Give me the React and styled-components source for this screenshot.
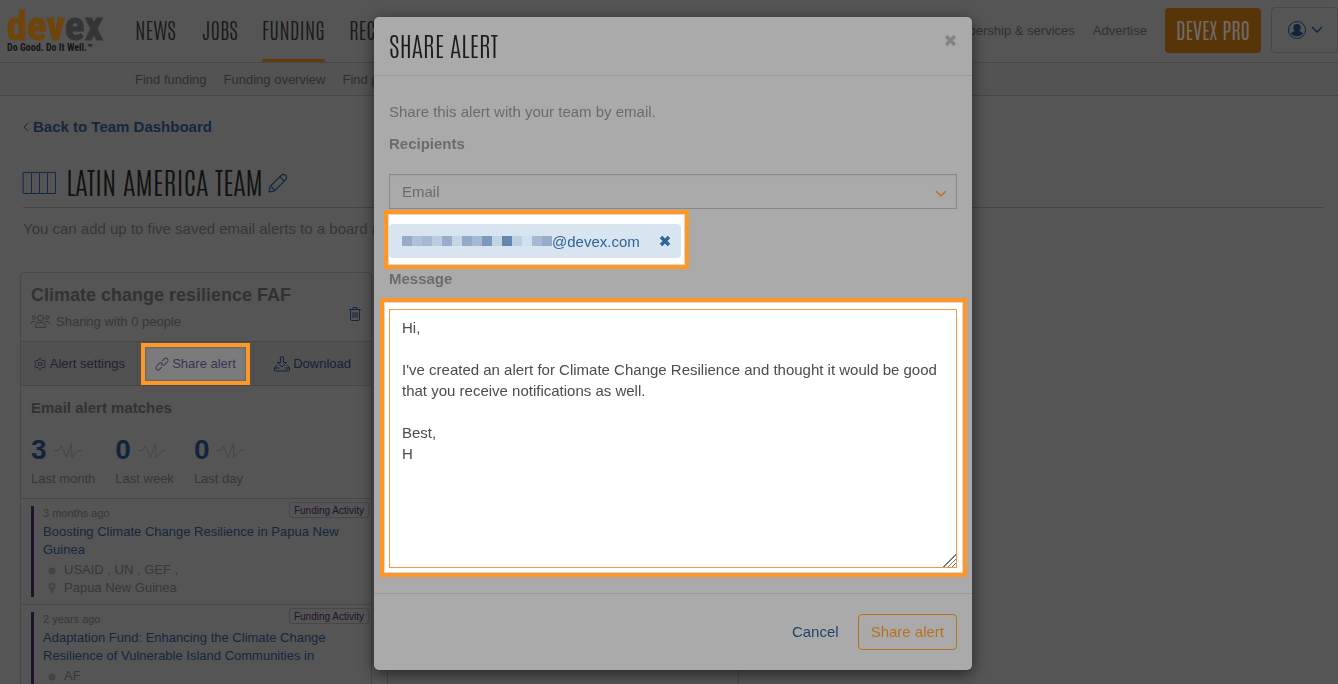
import { useState } from 'react';
import { Settings } from 'lucide-react';
import styled, { createGlobalStyle } from 'styled-components';

const GlobalStyle = createGlobalStyle`
    * {
        box-sizing: border-box;
    }

    body {
        margin: 0;
        height: 100vh;
        overflow: hidden;
        background: #555;
        color: #373737;
        font-family: "Liberation Sans", Arial, sans-serif;
        font-size: 15px;
        line-height: 21px;
    }

    a {
        color: inherit;
        text-decoration: none;
    }

    button, select, textarea {
        font: inherit;
        color: inherit;
        cursor: pointer;
    }

    h1, h2, h3, p, ul {
        margin: 0;
        padding: 0;
    }

    svg {
        display: block;
        flex-shrink: 0;
        overflow: visible;
    }
`;

const display = '"Antonio", "Bebas Neue", "Roboto Condensed", "Liberation Sans Narrow", "Liberation Sans", sans-serif';

const TopBar = styled.header`
    display: flex;
    align-items: flex-start;
    height: 63px;
    padding-left: 7px;
    border-bottom: 1px solid #474747;
    white-space: nowrap;
`;

const Logo = styled.a`
    width: 128px;
    padding-top: 8px;
    flex-shrink: 0;
`;

const MainNav = styled.nav`
    display: flex;
    gap: 24px;
    height: 62px;
    flex-grow: 1;
`;

const MainLink = styled.a`
    min-width: ${({ $width }) => $width}px;
    padding-top: 15px;
    border-bottom: 3px solid ${({ $active }) => ($active ? '#603b0a' : 'transparent')};
    font-family: ${display};
    font-size: 22px;
    line-height: 28px;
    font-weight: 100;
    color: #1a1a1a;
`;

const Tools = styled.div`
    display: flex;
    align-items: center;
    height: 60px;
    font-size: 13px;
    color: #303030;

    > a {
        margin-right: 18px;
    }
`;

const ProButton = styled.button`
    height: 45px;
    width: 96px;
    padding: 0 0 2px;
    border: none;
    border-radius: 4px;
    background: #583509;
    font-family: ${display};
    font-size: 21px;
    font-weight: 200;
    color: #706b66;
`;

const AccountButton = styled.button`
    display: flex;
    align-items: center;
    gap: 4px;
    height: 46px;
    width: 67px;
    margin-left: 10px;
    padding: 0 15px;
    border: 1px solid #474747;
    border-radius: 4px;
    background: none;
    color: #12243b;
`;

const SubNav = styled.nav`
    display: flex;
    align-items: center;
    gap: 17px;
    height: 33px;
    padding-left: 135px;
    border-bottom: 1px solid #474747;
    background: #535353;
    font-size: 13px;
    color: #2f2f2f;
    white-space: nowrap;
`;

const Content = styled.main`
    padding: 20px 15px 0 23px;
`;

const BackLink = styled.a`
    display: flex;
    align-items: center;
    gap: 4px;
    font-weight: bold;
    color: #14273f;
`;

const TeamHeading = styled.div`
    display: flex;
    align-items: center;
    gap: 10px;
    height: 71px;
    padding-top: 22px;
    border-bottom: 1px solid #434343;
    color: #142b45;
`;

const TeamName = styled.h1`
    padding-bottom: 5px;
    font-family: ${display};
    font-size: 30px;
    line-height: 40px;
    font-weight: 100;
    color: #111;
`;

const EditButton = styled.button`
    margin-left: -5px;
    padding: 0;
    border: none;
    background: none;
    color: #14273f;
`;

const Intro = styled.p`
    padding-top: 10px;
    color: #363636;
    white-space: nowrap;
`;

const Board = styled.section`
    display: flex;
    gap: 15px;
    margin: 33px 0 0 -3px;
`;

const Card = styled.article`
    width: 352px;
    min-height: 420px;
    flex-shrink: 0;
    border: 1px solid #474747;
    border-radius: 4px;
`;

const CardHeader = styled.div`
    display: flex;
    align-items: center;
    justify-content: space-between;
    height: 68px;
    padding: 0 10px;

    h2 {
        font-size: 18px;
        line-height: 24px;
        color: #323232;
    }

    > svg {
        margin-top: 14px;
        color: #14273f;
    }
`;

const Sharing = styled.p`
    display: flex;
    align-items: center;
    gap: 6px;
    margin-top: 4px;
    font-size: 13px;
`;

const Actions = styled.div`
    display: grid;
    grid-template-columns: repeat(3, 1fr);
    height: 45px;
    border: solid #474747;
    border-width: 1px 0;
    background: #515151;
`;

const Action = styled.button`
    display: flex;
    align-items: center;
    justify-content: center;
    gap: 3px;
    padding: 0;
    border: none;
    border-right: ${({ $last }) => ($last ? 'none' : '1px solid #474747')};
    background: none;
    font-size: 13px;
    color: ${({ $color }) => $color};
    white-space: nowrap;
`;

const ActionHighlight = styled.span`
    display: flex;
    align-items: center;
    justify-content: center;
    gap: 3px;
    width: 101px;
    height: 34px;
    background: #7b7b7b;
    box-shadow: 0 0 0 4px #ff9727, inset 0 0 2px 1px #666;
`;

const Matches = styled.div`
    height: 113px;
    padding: 11px 10px 0;
    border-bottom: 1px solid #474747;

    h3 {
        font-size: 15px;
        color: #323232;
    }
`;

const Stats = styled.div`
    display: flex;
    gap: 20px;
    margin-top: 14px;
    font-size: 13px;
`;

const StatValue = styled.div`
    display: flex;
    align-items: center;
    gap: 7px;
    height: 34px;
    margin-bottom: 2px;
    font-size: 28px;
    font-weight: bold;
    color: #12243c;

    svg {
        margin-top: 4px;
        color: #454545;
    }
`;

const Result = styled.div`
    padding: 7px 2px 7px 10px;
    border-bottom: 1px solid #474747;
`;

const ResultBody = styled.div`
    padding-left: 9px;
    border-left: 3px solid #22112f;
    font-size: 13px;
    line-height: 18px;

    > a {
        display: block;
        width: 310px;
        color: #14273f;
    }
`;

const ResultTop = styled.div`
    display: flex;
    justify-content: space-between;
    height: 17px;
    font-size: 11px;
    line-height: 14px;
`;

const Tag = styled.span`
    height: 16px;
    margin-top: -4px;
    padding: 0 4px;
    border: 1px solid #474747;
    border-radius: 3px;
    font-size: 10px;
    line-height: 16px;
    color: #22112f;
`;

const Meta = styled.ul`
    padding-top: 2px;
    list-style: none;

    li {
        display: flex;
        align-items: center;
        gap: 7px;
        padding-left: 4px;
    }

    svg {
        color: #444;
    }
`;

const ModalLayer = styled.div`
    position: fixed;
    inset: 0;
    display: flex;
    justify-content: center;
    align-items: flex-start;
    padding: 17px 0 0 8px;
`;

const Modal = styled.form`
    width: 598px;
    max-width: 100%;
    border-radius: 5px;
    background: #aaa;
    box-shadow: 0 4px 15px rgba(0, 0, 0, 0.55);
    color: #6b6b6b;
`;

const ModalHeader = styled.div`
    display: flex;
    justify-content: space-between;
    align-items: flex-start;
    height: 59px;
    padding: 17px 15px 0;
    border-bottom: 1px solid #999;

    h2 {
        font-family: ${display};
        font-size: 27px;
        line-height: 22px;
        font-weight: 100;
        color: #1c1c1c;
    }
`;

const IconButton = styled.button`
    display: block;
    padding: 0;
    border: none;
    background: none;
    color: ${({ $color }) => $color};
`;

const ModalBody = styled.div`
    padding: 25px 15px 20px;

    label {
        display: block;
        font-weight: bold;
        line-height: 22px;
    }
`;

const Lead = styled.p`
    margin-bottom: 11px;
`;

const SelectBox = styled.div`
    display: grid;
    align-items: center;
    margin: 19px 0 5px;

    > * {
        grid-area: 1 / 1;
    }

    > svg {
        justify-self: end;
        margin: 4px 10px 0 0;
        color: #b8721d;
        pointer-events: none;
    }
`;

const Select = styled.select`
    width: 100%;
    height: 35px;
    padding: 0 12px;
    appearance: none;
    border: 1px solid #888;
    border-radius: 0;
    background: #aaa;
    box-shadow: inset 0 1px 1px rgba(0, 0, 0, 0.05);
`;

const Highlight = styled.div`
    width: ${({ $wide }) => ($wide ? 'auto' : 'fit-content')};
    margin: ${({ $wide }) => ($wide ? '12px -6px 0 -5px' : '0 0 3px -1px')};
    padding: ${({ $wide }) => ($wide ? '7px 6px 5px 5px' : '10px 4px 7px 1px')};
    background: #fff;
    box-shadow: 0 0 0 4px #ff9727, inset 0 0 1px 1px #d5d5d5;
`;

const Chip = styled.div`
    display: flex;
    align-items: center;
    height: 34px;
    padding: 0 10px 0 13px;
    border-radius: 4px;
    background: #d8e5f0;
    color: #2f6496;

    button {
        margin-left: 19px;
    }
`;

const Redacted = styled.span`
    display: flex;
`;

const Block = styled.i`
    width: 10px;
    height: 10px;
    background: ${({ $color }) => $color};
`;

const Message = styled.textarea`
    display: block;
    width: 100%;
    height: 259px;
    padding: 7px 12px;
    border: 1px solid #f39b3b;
    outline: none;
    resize: vertical;
    color: #4c4c4c;
    cursor: text;

    &::-webkit-resizer {
        background:
            linear-gradient(135deg, #fff 50%, transparent 50%),
            repeating-linear-gradient(135deg, #777 0 1px, #fff 1px 3px);
    }
`;

const ModalFooter = styled.div`
    display: flex;
    justify-content: flex-end;
    gap: 6px;
    padding: 20px 15px;
    border-top: 1px solid #999;
`;

const Button = styled.button`
    height: 36px;
    padding: 0 12px 2px;
    border: 1px solid ${({ $primary }) => ($primary ? '#b8721d' : 'transparent')};
    border-radius: 4px;
    background: none;
    color: ${({ $primary }) => ($primary ? '#b8721d' : '#1f436a')};
`;

const blocks = [
    '#95abc8', '#adc2da', '#a6b7d1', '#bccde0', '#98adc9', '#c6d5e5', '#91aac7', '#a4bad3',
    '#7a99bc', '#c2d3e4', '#6486ae', '#bccfe1', '#d0e0ed', '#a6b8d2', '#98abc9',
];

const results = [
    {
        age: '3 months ago',
        title: 'Boosting Climate Change Resilience in Papua New Guinea',
        donors: 'USAID , UN , GEF ,',
        place: 'Papua New Guinea',
    },
    {
        age: '2 years ago',
        title: 'Adaptation Fund: Enhancing the Climate Change Resilience of Vulnerable Island Communities in',
        donors: 'AF',
    },
];

const stats = [
    { value: 3, label: 'Last month' },
    { value: 0, label: 'Last week' },
    { value: 0, label: 'Last day' },
];

const defaultMessage = `Hi,

I've created an alert for Climate Change Resilience and thought it would be good that you receive notifications as well.

Best,
H`;

function Icon({ width, height, box, stroke = 1, children }) {
    return (
        <svg
            width={width}
            height={height}
            viewBox={box || `0 0 ${width} ${height}`}
            fill="none"
            stroke="currentColor"
            strokeWidth={stroke}
            strokeLinecap="round"
            strokeLinejoin="round"
            aria-hidden="true"
        >
            {children}
        </svg>
    );
}

function Chevron({ width, height, stroke }) {
    return (
        <Icon width={width} height={height} box="0 0 12 8" stroke={stroke}>
            <path d="M1.5 1.5 6 6l4.5-4.5" />
        </Icon>
    );
}

function Cross({ size }) {
    return (
        <svg width={size} height={size} viewBox="0 0 12 12" fill="currentColor" aria-hidden="true">
            <path d="M3.2.8 6 3.6 8.8.8l2.4 2.4L8.4 6l2.8 2.8-2.4 2.4L6 8.4l-2.8 2.8L.8 8.8 3.6 6 .8 3.2z" />
        </svg>
    );
}

function DevexLogo() {
    return (
        <svg width="112" height="46" viewBox="0 0 112 46" role="img" aria-label="Devex">
            <g fontFamily='"Roboto Condensed", "Liberation Sans Narrow", "Liberation Sans", sans-serif' fontWeight="bold">
                <text x="0" y="32" fontSize="41" strokeWidth="1" stroke="#6f450c" fill="#6f450c">
                    dev
                    <tspan fill="#353535" stroke="#353535">ex</tspan>
                </text>
                <text x="0" y="43" fontSize="10" fill="#161616">Do Good. Do It Well.™</text>
            </g>
        </svg>
    );
}

function Pulse() {
    return (
        <Icon width={28} height={16}>
            <path d="M.5 7.5H5L7.5 3l5 11.5 5-14 .5 14 6-7h3.5" />
        </Icon>
    );
}

function ResultRow({ result }) {
    return (
        <Result>
            <ResultBody>
                <ResultTop>
                    {result.age}
                    <Tag>Funding Activity</Tag>
                </ResultTop>
                <a href="#result">{result.title}</a>
                <Meta>
                    <li>
                        <svg width="10" height="10" viewBox="0 0 10 10" fill="currentColor" aria-hidden="true">
                            <circle cx="5" cy="6" r="3.5" />
                        </svg>
                        {result.donors}
                    </li>
                    {result.place && (
                        <li>
                            <svg width="10" height="12" viewBox="0 0 10 12" fill="currentColor" fillRule="evenodd" aria-hidden="true">
                                <path d="M5 .5A3.5 3.5 0 0 1 8.5 4C8.5 6.5 6 8 5.5 11.5h-1C4 8 1.5 6.5 1.5 4A3.5 3.5 0 0 1 5 .5zm0 2a1.6 1.6 0 1 0 0 3.2 1.6 1.6 0 0 0 0-3.2z" />
                            </svg>
                            {result.place}
                        </li>
                    )}
                </Meta>
            </ResultBody>
        </Result>
    );
}

function AlertCard() {
    return (
        <Card>
            <CardHeader>
                <div>
                    <h2>Climate change resilience FAF</h2>
                    <Sharing>
                        <Icon width={19} height={14}>
                            <circle cx="9.5" cy="4" r="3" />
                            <path d="M4.5 13v-1.5a3 3 0 0 1 3-3h4a3 3 0 0 1 3 3V13z" />
                            <circle cx="2.8" cy="3.5" r="1.7" />
                            <circle cx="16.2" cy="3.5" r="1.7" />
                            <path d="M.5 9.5V9A1.5 1.5 0 0 1 2 7.5h2M18.5 9.5V9A1.5 1.5 0 0 0 17 7.5h-2" />
                        </Icon>
                        Sharing with 0 people
                    </Sharing>
                </div>
                <Icon width={12} height={14}>
                    <path d="M.5 2.5h11M4 2.5v-2h4v2M1.5 2.5V12A1.5 1.5 0 0 0 3 13.5h6a1.5 1.5 0 0 0 1.5-1.5V2.5M4 5.5v5M6 5.5v5M8 5.5v5" />
                </Icon>
            </CardHeader>
            <Actions>
                <Action $color="#241d36">
                    <Settings size={14} strokeWidth={1.5} aria-hidden="true" />
                    Alert settings
                </Action>
                <Action $color="#3a3354">
                    <ActionHighlight>
                        <Icon width={14} height={14}>
                            <g transform="rotate(-45 7 7)">
                                <path d="M4.5 9h-3a2 2 0 0 1-2-2 2.2 2.2 0 0 1 2-2.3h4A2.2 2.2 0 0 1 7.7 7" />
                                <path d="M9.5 5h3a2 2 0 0 1 2 2 2.2 2.2 0 0 1-2 2.3h-4A2.2 2.2 0 0 1 6.3 7" />
                            </g>
                        </Icon>
                        Share alert
                    </ActionHighlight>
                </Action>
                <Action $color="#12243b" $last>
                    <Icon width={16} height={16}>
                        <path d="M6.5 1h3v5.500h3L8 11 3.500 6.500h3zM3 9.500h-.5l-2 2.500v2a1 1 0 0 0 1 1h13a1 1 0 0 0 1-1v-2l-2-2.500H13M.5 12H5M11 12h4.500M12.500 13.500h.5" />
                    </Icon>
                    Download
                </Action>
            </Actions>
            <Matches>
                <h3>Email alert matches</h3>
                <Stats>
                    {stats.map(({ value, label }) => (
                        <div key={label}>
                            <StatValue>{value}<Pulse /></StatValue>
                            {label}
                        </div>
                    ))}
                </Stats>
            </Matches>
            {results.map((result) => <ResultRow key={result.title} result={result} />)}
        </Card>
    );
}

function ShareModal() {
    const [message, setMessage] = useState(defaultMessage);

    return (
        <ModalLayer>
            <Modal role="dialog" aria-labelledby="share-title" onSubmit={(e) => e.preventDefault()}>
                <ModalHeader>
                    <h2 id="share-title">SHARE ALERT</h2>
                    <IconButton type="button" $color="#848484" aria-label="Close">
                        <Cross size={13} />
                    </IconButton>
                </ModalHeader>
                <ModalBody>
                    <Lead>Share this alert with your team by email.</Lead>
                    <label htmlFor="recipients">Recipients</label>
                    <SelectBox>
                        <Select id="recipients">
                            <option>Email</option>
                        </Select>
                        <Chevron width={12} height={8} stroke={1.5} />
                    </SelectBox>
                    <Highlight>
                        <Chip>
                            <Redacted>
                                {blocks.map((color, i) => <Block key={i} $color={color} />)}
                            </Redacted>
                            @devex.com
                            <IconButton type="button" $color="#2f6496" aria-label="Remove recipient">
                                <Cross size={12} />
                            </IconButton>
                        </Chip>
                    </Highlight>
                    <label htmlFor="message">Message</label>
                    <Highlight $wide>
                        <Message id="message" value={message} onChange={(e) => setMessage(e.target.value)} />
                    </Highlight>
                </ModalBody>
                <ModalFooter>
                    <Button type="button">Cancel</Button>
                    <Button $primary>Share alert</Button>
                </ModalFooter>
            </Modal>
        </ModalLayer>
    );
}

function App() {
    return (
        <>
            <GlobalStyle />
            <TopBar>
                <Logo href="#home"><DevexLogo /></Logo>
                <MainNav>
                    <MainLink href="#news" $width={43}>NEWS</MainLink>
                    <MainLink href="#jobs" $width={34}>JOBS</MainLink>
                    <MainLink href="#funding" $width={60} $active>FUNDING</MainLink>
                    <MainLink href="#recruiting" $width={80}>RECRUITING</MainLink>
                </MainNav>
                <Tools>
                    <a href="#membership">Membership &amp; services</a>
                    <a href="#advertise">Advertise</a>
                    <ProButton>DEVEX PRO</ProButton>
                    <AccountButton aria-label="Account">
                        <svg width="20" height="20" viewBox="0 0 20 20" aria-hidden="true">
                            <circle cx="10" cy="10" r="8.5" fill="none" stroke="currentColor" />
                            <path d="M10 4a3.7 3.7 0 0 1 3.7 3.7c0 1.500-.7 2.700-1.400 3.300l4 2.200a8 8 0 0 1-12.600 0l4-2.200c-.7-.6-1.400-1.800-1.400-3.300A3.700 3.700 0 0 1 10 4z" fill="currentColor" />
                        </svg>
                        <Chevron width={12} height={8} stroke={1.5} />
                    </AccountButton>
                </Tools>
            </TopBar>
            <SubNav>
                <a href="#find-funding">Find funding</a>
                <a href="#overview">Funding overview</a>
                <a href="#find-people">Find people</a>
            </SubNav>
            <Content>
                <BackLink href="#dashboard">
                    <Icon width={6} height={10}>
                        <path d="M5 1 1 5l4 4" />
                    </Icon>
                    Back to Team Dashboard
                </BackLink>
                <TeamHeading>
                    <Icon width={33} height={22}>
                        <path d="M.5.5h32v21H.5zM8.5.5v21M16.5.5v21M24.5.5v21" />
                    </Icon>
                    <TeamName>LATIN AMERICA TEAM</TeamName>
                    <EditButton aria-label="Rename team">
                        <Icon width={20} height={20} stroke={1.2}>
                            <path d="M1 19l1.2-5.500L13.500 2.200a2.500 2.500 0 0 1 3.600 0l.7.7a2.500 2.500 0 0 1 0 3.600L6.500 17.800zM12 3.700l4.300 4.300M2.200 13.500l1.800.5.500 1.500 1.500.5.500 1.800" />
                        </Icon>
                    </EditButton>
                </TeamHeading>
                <Intro>You can add up to five saved email alerts to a board and share them with your team.</Intro>
                <Board>
                    <AlertCard />
                    <Card />
                </Board>
            </Content>
            <ShareModal />
        </>
    );
}

export default App;
